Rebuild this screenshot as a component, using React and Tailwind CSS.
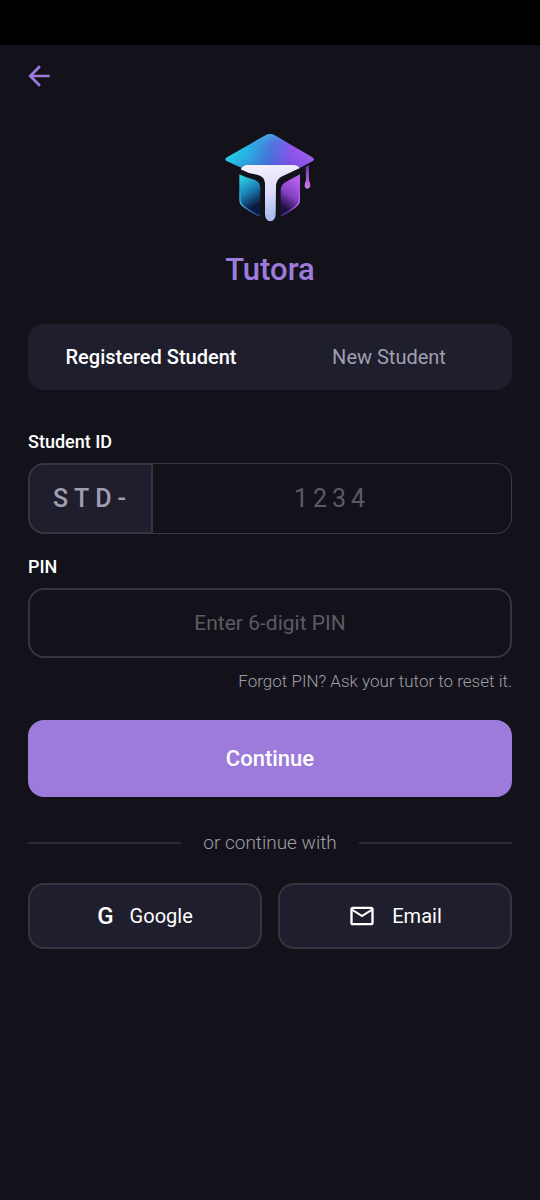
import { useState } from 'react';
import { MdArrowBack, MdMailOutline } from 'react-icons/md';

function Logo() {
  return (
    <svg viewBox="0 0 360 360" className="size-30" role="img" aria-label="Tutora logo">
      <defs>
        <linearGradient id="cap" gradientUnits="userSpaceOnUse" x1="50" y1="100" x2="310" y2="130">
          <stop offset="0" stopColor="#22dcec" />
          <stop offset="0.25" stopColor="#26b4e0" />
          <stop offset="0.5" stopColor="#4a74dc" />
          <stop offset="0.75" stopColor="#9a50f0" />
          <stop offset="1" stopColor="#b768f6" />
        </linearGradient>
        <linearGradient id="capShine" gradientUnits="userSpaceOnUse" x1="160" y1="40" x2="170" y2="145">
          <stop offset="0" stopColor="#45d6ee" stopOpacity="0.6" />
          <stop offset="0.4" stopColor="#4a80e0" stopOpacity="0.05" />
          <stop offset="1" stopColor="#3a3cc0" stopOpacity="0.3" />
        </linearGradient>
        <linearGradient id="tee" gradientUnits="userSpaceOnUse" x1="150" y1="135" x2="190" y2="303">
          <stop offset="0" stopColor="#f4f0ff" />
          <stop offset="0.5" stopColor="#dcdcfa" />
          <stop offset="1" stopColor="#9fb6ee" />
        </linearGradient>
        <linearGradient id="left" gradientUnits="userSpaceOnUse" x1="88" y1="175" x2="140" y2="255">
          <stop offset="0" stopColor="#2fd0e4" />
          <stop offset="0.5" stopColor="#1b82b8" />
          <stop offset="1" stopColor="#0b1a40" />
        </linearGradient>
        <linearGradient id="right" gradientUnits="userSpaceOnUse" x1="270" y1="185" x2="218" y2="260">
          <stop offset="0" stopColor="#b961ee" />
          <stop offset="0.55" stopColor="#8440c4" />
          <stop offset="1" stopColor="#1d1142" />
        </linearGradient>
        <linearGradient id="rimLeft" gradientUnits="userSpaceOnUse" x1="88" y1="200" x2="152" y2="292">
          <stop offset="0" stopColor="#38c8e8" stopOpacity="0" />
          <stop offset="0.4" stopColor="#38c8e8" />
          <stop offset="1" stopColor="#3c58b8" stopOpacity="0.5" />
        </linearGradient>
        <linearGradient id="rimRight" gradientUnits="userSpaceOnUse" x1="270" y1="200" x2="212" y2="292">
          <stop offset="0" stopColor="#c76df4" stopOpacity="0" />
          <stop offset="0.4" stopColor="#c76df4" />
          <stop offset="1" stopColor="#7446d0" stopOpacity="0.5" />
        </linearGradient>
        <linearGradient id="tassel" x1="0" y1="0" x2="0" y2="1">
          <stop offset="0" stopColor="#5b35a0" />
          <stop offset="1" stopColor="#d57bee" />
        </linearGradient>
      </defs>
      <path d="M51 112 L164 47 Q179 38 194 46 L307 112 Q317 118 307 124 L262 148 Q266 135 250 135 H112 Q99 135 94 143 L51 124 Q41 118 51 112Z" fill="url(#cap)" />
      <path d="M51 112 L164 47 Q179 38 194 46 L307 112 Q317 118 307 124 L262 148 Q266 135 250 135 H112 Q99 135 94 143 L51 124 Q41 118 51 112Z" fill="url(#capShine)" />
      <path d="M92 148 Q98 135 112 135 H250 Q267 136 268 145 L220 167 Q200 174 198 196 L197 282 Q196 303 181 304 Q166 303 165 282 V190 Q164 169 142 164 Q116 162 92 148Z" fill="url(#tee)" />
      <path d="M88 163 Q107 173 126 177 Q151 183 151 205 V291 Q126 280 102 263 Q88 253 88 239Z" fill="url(#left)" />
      <path d="M90 200 V239 Q90 251 103 261 Q126 278 150 288" fill="none" stroke="url(#rimLeft)" strokeWidth="4" />
      <path d="M270 163 L231 184 Q212 193 212 210 V291 Q235 279 256 263 Q270 253 270 239Z" fill="url(#right)" />
      <path d="M268 200 V239 Q268 251 255 261 Q235 277 213 288" fill="none" stroke="url(#rimRight)" strokeWidth="4" />
      <path d="M287 141 L297 136 V181 Q301 187 301 195 Q301 205 292 206 Q283 205 284 195 Q284 187 288 181Z" fill="url(#tassel)" />
    </svg>
  );
}

function Tab({ selected, onClick, children }) {
  return (
    <button
      type="button"
      role="tab"
      aria-selected={selected}
      onClick={onClick}
      className={selected ? 'flex-1 text-[20px] font-medium text-white' : 'flex-1 text-[20px] text-[#a09fb1]'}
    >
      {children}
    </button>
  );
}

function SocialButton({ icon, children }) {
  return (
    <button
      type="button"
      className="flex h-[66px] flex-1 items-center justify-center gap-4 rounded-2xl border-2 border-[#353441] bg-[#1f1e2d] text-[20px] text-white"
    >
      {icon}
      {children}
    </button>
  );
}

export default function App() {
  const [tab, setTab] = useState('registered');

  return (
    <div className="flex min-h-screen flex-col bg-[#13121a] font-['Roboto',sans-serif] text-white">
      <div className="h-[45px] bg-black" />
      <header className="px-[23px] pt-[15px]">
        <button type="button" aria-label="Back" className="block text-[#9d7bdb]">
          <MdArrowBack size={32} />
        </button>
      </header>

      <main className="flex flex-col px-7 pb-10">
        <div className="mt-7 flex flex-col items-center">
          <Logo />
          <h1 className="mt-2 text-[31px] leading-11 font-medium text-[#9d7bdb]">Tutora</h1>
        </div>

        <div role="tablist" className="mt-8 flex h-[66px] rounded-2xl bg-[#1f1e2d] px-1">
          <Tab selected={tab === 'registered'} onClick={() => setTab('registered')}>Registered Student</Tab>
          <Tab selected={tab === 'new'} onClick={() => setTab('new')}>New Student</Tab>
        </div>

        <form className="flex flex-col" onSubmit={(e) => e.preventDefault()}>
          <label htmlFor="student-id" className="mt-10 text-[18px] leading-6 font-medium">Student ID</label>
          <div className="mt-[9px] flex h-[71px]">
            <span className="flex w-[125px] items-center justify-center rounded-l-2xl border-2 border-[#353441] bg-[#1f1e2d] pl-1 text-[25px] font-medium tracking-[6px] text-[#a09fb1]">
              STD-
            </span>
            <input
              id="student-id"
              inputMode="numeric"
              placeholder="1234"
              className="min-w-0 flex-1 rounded-r-2xl border border-l-0 border-[#3a3942] bg-transparent text-center text-[25px] tracking-[5px] outline-none placeholder:text-[#5c5b62]"
            />
          </div>

          <label htmlFor="pin" className="mt-[21px] text-[18px] leading-6 font-medium">PIN</label>
          <input
            id="pin"
            type="password"
            inputMode="numeric"
            maxLength={6}
            placeholder="Enter 6-digit PIN"
            className="mt-[9px] h-[70px] w-full rounded-2xl border-2 border-[#353441] bg-transparent text-center text-[21px] outline-none placeholder:text-[#5c5b62]"
          />
          <p className="mt-[11px] text-right text-[17px] leading-6 font-light text-[#a09fa8]">
            Forgot PIN? Ask your tutor to reset it.
          </p>

          <button type="submit" className="mt-[27px] h-[77px] rounded-2xl bg-[#9d7bdb] text-[22px] font-medium text-white">
            Continue
          </button>
        </form>

        <div className="mt-[34px] flex items-center gap-[22px] text-[19px] leading-6 font-light text-[#a09fa8]">
          <span className="h-0.5 flex-1 bg-[#2c2b34]" />
          or continue with
          <span className="h-0.5 flex-1 bg-[#2c2b34]" />
        </div>

        <div className="mt-7 flex gap-4">
          <SocialButton icon={<span className="text-[24px] font-medium">G</span>}>Google</SocialButton>
          <SocialButton icon={<MdMailOutline size={28} />}>Email</SocialButton>
        </div>
      </main>
    </div>
  );
}
